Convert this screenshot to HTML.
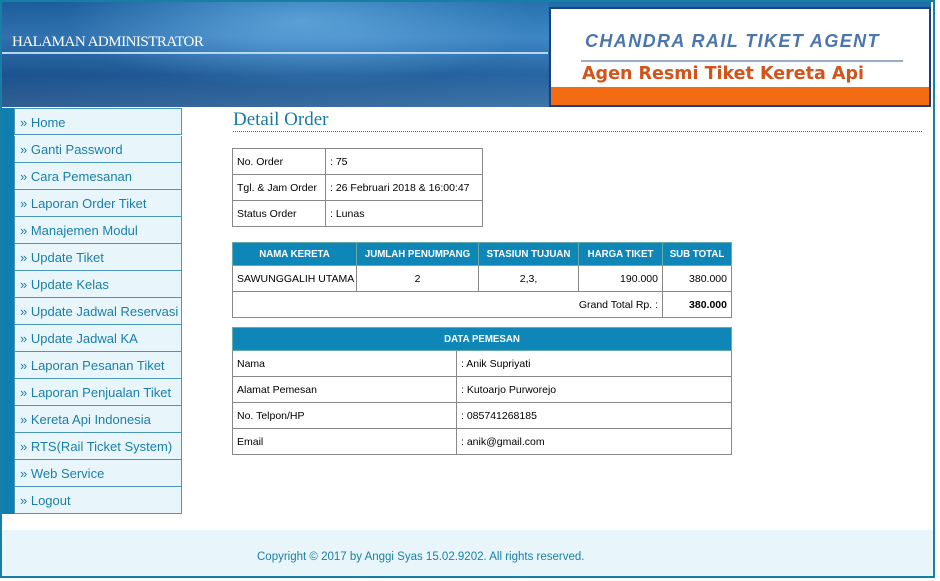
<!DOCTYPE html>
<html><head><meta charset="utf-8"><style>
*{margin:0;padding:0;box-sizing:border-box}
body{width:940px;height:581px;background:#fff;font-family:"Liberation Sans",sans-serif;position:relative;overflow:hidden}
#frame{position:absolute;left:0;top:0;width:935px;height:578px;border:2px solid #177fa3;}
#hdr{position:absolute;left:0;top:0;width:931px;height:107px;background:linear-gradient(180deg,#1d6aa8 0%,#3b86c4 35%,#1f5c99 70%,#3d6f9e 100%)}
#hdr .sw{position:absolute;left:0;top:0;width:548px;height:107px;background:radial-gradient(ellipse at 55% 20%,rgba(120,190,240,.6),transparent 55%),linear-gradient(90deg,rgba(20,60,120,.3),rgba(70,140,200,.2))}
#hdr .ln{position:absolute;left:0;top:52px;width:548px;height:2px;background:#b8d6ee}
#hdr .t{position:absolute;left:12px;top:34px;color:#fff;font-family:"Liberation Serif",serif;font-size:15px;letter-spacing:-.5px}
#logo{position:absolute;left:549px;top:7px;width:382px;height:100px;background:#fff;border:2px solid #1c3f80}
#logo .a{position:absolute;left:34px;top:22px;font-family:"Liberation Sans",sans-serif;font-style:italic;font-weight:bold;font-size:18px;color:#4a76ad;letter-spacing:1.4px}
#logo .l{position:absolute;left:30px;top:51px;width:322px;height:2px;background:#9aaecc}
#logo .b{position:absolute;left:31px;top:55px;font-family:"DejaVu Sans",sans-serif;font-weight:bold;font-size:17.5px;color:#d2541b}
#logo .o{position:absolute;left:0;top:78px;width:378px;height:18px;background:#f36c12}
#side{position:absolute;left:2px;top:108px;width:12px;height:406px;background:#0e7fb0}
.m{position:absolute;left:14px;width:168px;height:27px;background:#e8f6fc;border:1px solid #4a97b8;border-top:none;font-size:13px;color:#1a7fa8;padding:6px 0 0 5px;white-space:nowrap}
h1{position:absolute;left:233px;top:109px;font-family:"Liberation Serif",serif;font-weight:normal;font-size:19px;color:#1b7aa3}
.dot{position:absolute;left:233px;top:131px;width:689px;border-top:1px dotted #1b7aa3}
table{position:absolute;border-collapse:collapse;font-size:10.5px;color:#000;table-layout:fixed}
td,th{border:1px solid #888;padding:0 4px;height:26px;white-space:nowrap;overflow:hidden}
th{background:#0f86b8;color:#fff;font-weight:bold;height:23px;font-size:9.7px;border-color:#6aa;padding:0 2px}
#foot{position:absolute;left:2px;top:530px;width:931px;height:46px;background:#e8f5fa}
#foot span{position:absolute;left:255px;top:21px;font-size:11.5px;color:#1a7fa8}
</style></head><body>
<div id="hdr"><div class="sw"></div><div class="ln"></div><div class="t">HALAMAN ADMINISTRATOR</div></div>
<div id="logo"><div class="a">CHANDRA RAIL TIKET AGENT</div><div class="l"></div><div class="b">Agen Resmi Tiket Kereta Api</div><div class="o"></div></div>
<div id="side"></div>
<div class="m" style="top:108px;border-top:1px solid #4a97b8">» Home</div>
<div class="m" style="top:136px">» Ganti Password</div>
<div class="m" style="top:163px">» Cara Pemesanan</div>
<div class="m" style="top:190px">» Laporan Order Tiket</div>
<div class="m" style="top:217px">» Manajemen Modul</div>
<div class="m" style="top:244px">» Update Tiket</div>
<div class="m" style="top:271px">» Update Kelas</div>
<div class="m" style="top:298px">» Update Jadwal Reservasi</div>
<div class="m" style="top:325px">» Update Jadwal KA</div>
<div class="m" style="top:352px">» Laporan Pesanan Tiket</div>
<div class="m" style="top:379px">» Laporan Penjualan Tiket</div>
<div class="m" style="top:406px">» Kereta Api Indonesia</div>
<div class="m" style="top:433px">» RTS(Rail Ticket System)</div>
<div class="m" style="top:460px">» Web Service</div>
<div class="m" style="top:487px">» Logout</div>
<h1>Detail Order</h1><div class="dot"></div>
<table style="left:232px;top:148px;width:251px">
<col style="width:93px"><col>
<tr><td>No. Order</td><td>: 75</td></tr>
<tr><td>Tgl. &amp; Jam Order</td><td>: 26 Februari 2018 &amp; 16:00:47</td></tr>
<tr><td>Status Order</td><td>: Lunas</td></tr></table>
<table style="left:232px;top:242px;width:500px">
<col style="width:124px"><col style="width:122px"><col style="width:100px"><col style="width:84px"><col>
<tr><th>NAMA KERETA</th><th>JUMLAH PENUMPANG</th><th>STASIUN TUJUAN</th><th>HARGA TIKET</th><th>SUB TOTAL</th></tr>
<tr><td>SAWUNGGALIH UTAMA</td><td style="text-align:center">2</td><td style="text-align:center">2,3,</td><td style="text-align:right">190.000</td><td style="text-align:right">380.000</td></tr>
<tr><td colspan="4" style="text-align:right">Grand Total Rp. :</td><td style="text-align:right;font-weight:bold">380.000</td></tr></table>
<table style="left:232px;top:327px;width:500px">
<col style="width:224px"><col>
<tr><th colspan="2">DATA PEMESAN</th></tr>
<tr><td>Nama</td><td>: Anik Supriyati</td></tr>
<tr><td>Alamat Pemesan</td><td>: Kutoarjo Purworejo</td></tr>
<tr><td>No. Telpon/HP</td><td>: 085741268185</td></tr>
<tr><td>Email</td><td>: anik@gmail.com</td></tr></table>
<div id="foot"><span>Copyright © 2017 by Anggi Syas 15.02.9202. All rights reserved.</span></div>
<div id="frame"></div>
</body></html>
